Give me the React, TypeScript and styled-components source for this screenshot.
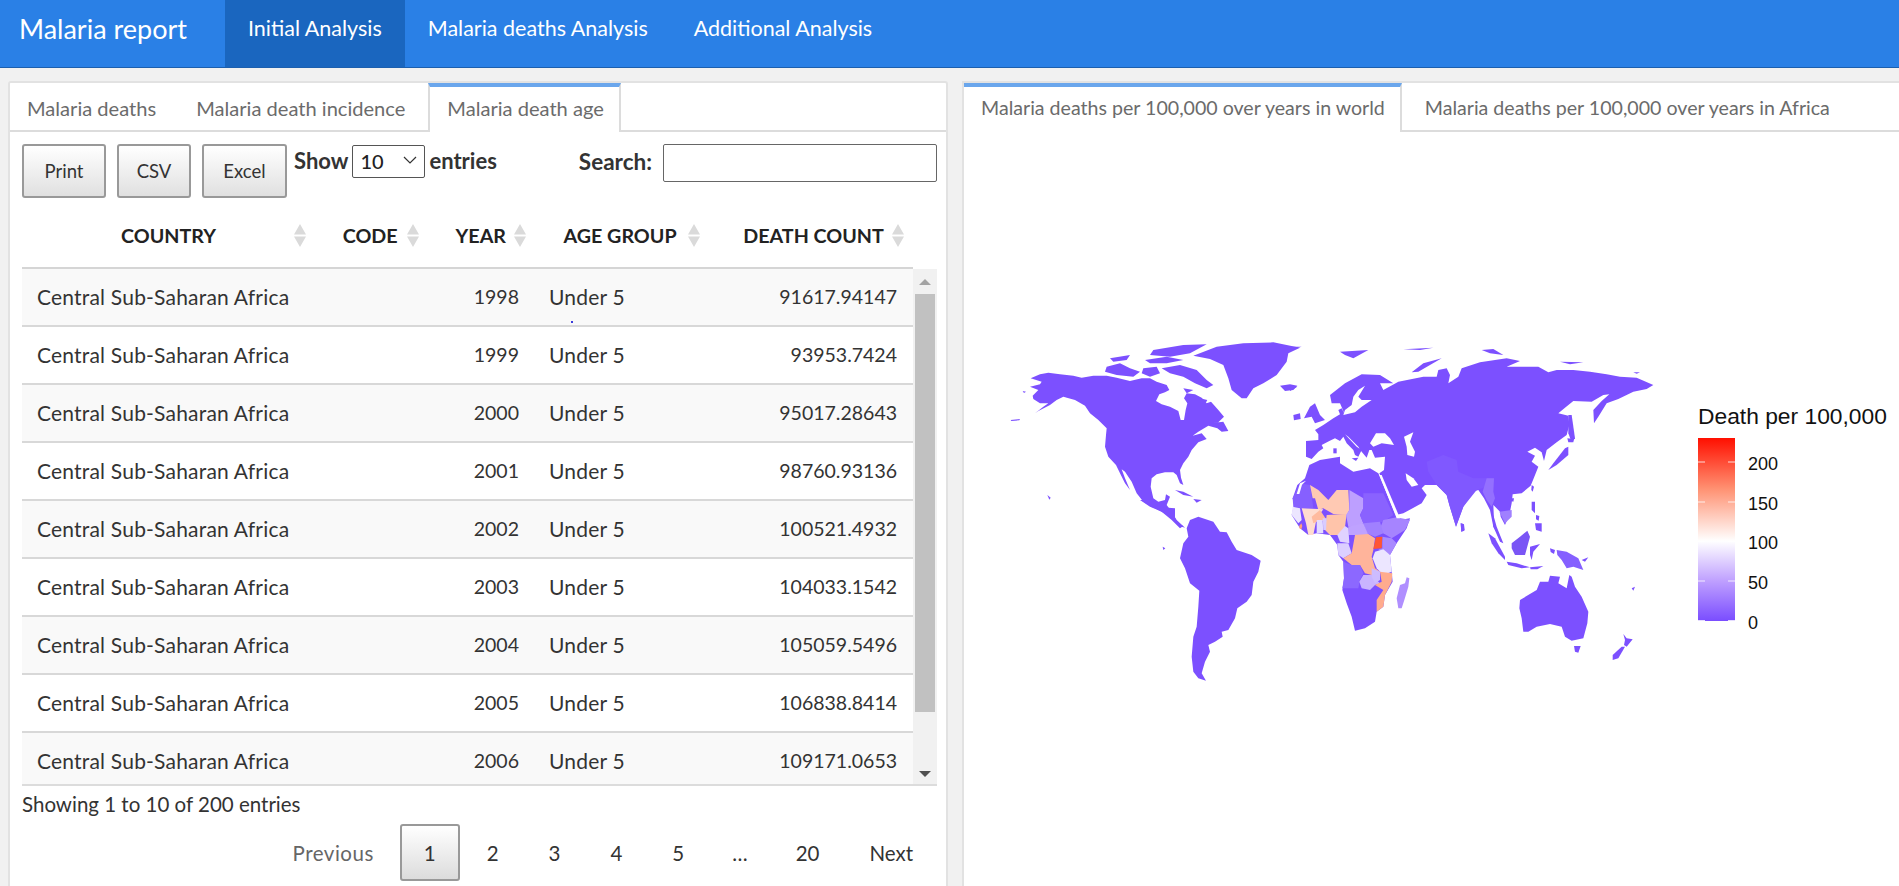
import React from 'react';
import styled, { createGlobalStyle } from 'styled-components';

const GlobalStyle = createGlobalStyle`
  html, body {
    margin: 0;
    height: 100%;
    overflow: hidden;
    background: #f1f1f1;
    font-family: Lato, "Open Sans", sans-serif;
    color: #333;
  }
  * { box-sizing: border-box; }
`;

const Navbar = styled.nav`
  display: flex;
  height: 68px;
  background: #2a80e6;
  border-bottom: 1px solid #1c5fae;
  color: #fff;
`;

const Brand = styled.div`
  width: 225px;
  padding-left: 19px;
  font-size: 27px;
  line-height: 57px;
`;

const NavLink = styled.div<{ $active?: boolean }>`
  padding: 0 23px;
  font-size: 21.5px;
  line-height: 56px;
  background: ${({ $active }) => ($active ? '#1a66bf' : 'transparent')};
`;

const Main = styled.main`
  display: flex;
  gap: 14px;
  height: 818px;
  padding: 13px 0 0 8px;
`;

const LeftBox = styled.section`
  width: 940px;
  background: #fff;
  border: 2px solid #e2e2e2;
  border-bottom: 0;
  border-radius: 3px 3px 0 0;
`;

const RightBox = styled.section`
  flex: 1;
  background: #fff;
  border-left: 2px solid #e2e2e2;
  border-top: 2px solid #e2e2e2;
`;

const TabBar = styled.div<{ $size: number }>`
  display: flex;
  height: 49px;
  font-size: ${({ $size }) => $size}px;
  border-bottom: 2px solid #dcdcdc;
`;

const Tab = styled.div<{ $left?: number; $right?: number }>`
  padding: 0 ${({ $right }) => $right ?? 20}px 0 ${({ $left }) => $left ?? 20}px;
  height: 47px;
  line-height: 50px;
  color: #6b6b6b;
  white-space: nowrap;
`;

const ActiveTab = styled(Tab)<{ $edge?: boolean }>`
  height: 49px;
  padding: 0 15px 0 17px;
  line-height: 42px;
  background: #fff;
  border-top: 4px solid #6aa6ec;
  border-right: 2px solid #dcdcdc;
  border-left: ${({ $edge }) => ($edge ? '0' : '2px solid #dcdcdc')};
`;

const Content = styled.div`
  position: relative;
  padding: 12px 9px 0 12px;
`;

const Controls = styled.div`
  display: flex;
  height: 62px;
`;

const ActionButton = styled.button<{ $width: number }>`
  width: ${({ $width }) => $width}px;
  height: 54px;
  margin-right: 11px;
  padding: 0;
  font: 18.5px Lato, sans-serif;
  color: #333;
  background: linear-gradient(#fff, #e0e0e0);
  border: 2px solid #999;
  border-radius: 3px;
`;

const LengthLabel = styled.label`
  display: flex;
  gap: 4px;
  height: 34px;
  margin-left: -4px;
  font-size: 22px;
  font-weight: 700;
  line-height: 33px;
`;

const SelectWrap = styled.span`
  position: relative;
  display: block;
  width: 73px;
  height: 33px;
`;

const LengthSelect = styled.select`
  appearance: none;
  width: 100%;
  height: 100%;
  padding-left: 7px;
  font: 500 20px Lato, sans-serif;
  color: #222;
  background: #fff;
  border: 1px solid #555;
  border-radius: 2px;
`;

const Chevron = styled.svg`
  position: absolute;
  top: 12px;
  right: 8px;
  pointer-events: none;
`;

const SearchLabel = styled.label`
  display: flex;
  gap: 11px;
  margin-left: auto;
  font-size: 22.5px;
  font-weight: 700;
  line-height: 36px;
`;

const SearchInput = styled.input`
  width: 274px;
  height: 38px;
  border: 1px solid #666;
  border-radius: 2px;
`;

const HeaderRow = styled.div`
  display: flex;
  align-items: center;
  width: 891px;
  height: 62px;
  margin-top: 1px;
  border-bottom: 2px solid #d5d5d5;
`;

const HeaderCell = styled.div<{ $width: number; $pad: number; $gap: number }>`
  display: flex;
  align-items: center;
  gap: ${({ $gap }) => $gap}px;
  width: ${({ $width }) => $width}px;
  padding: 0 0 4px ${({ $pad }) => $pad}px;
  font-size: 19.7px;
  font-weight: 700;
  color: #222;
  white-space: nowrap;
`;

const SortArrows = () => (
  <svg width="12" height="23" viewBox="0 0 12 23">
    <path d="M6 0 L12 10.5 H0 Z M0 12.5 H12 L6 23 Z" fill="#dadada" />
  </svg>
);

const TableFrame = styled.div`
  display: flex;
  height: 517px;
  border-bottom: 2px solid #dcdcdc;
`;

const Rows = styled.div`
  width: 891px;
  overflow: hidden;
`;

const Row = styled.div<{ $odd: boolean }>`
  display: grid;
  grid-template-columns: 390px 92px 1fr;
  align-items: center;
  height: 58px;
  padding: 0 16px 2px 15px;
  font-size: 21px;
  letter-spacing: 0.2px;
  background: ${({ $odd }) => ($odd ? '#f9f9f9' : '#fff')};
  border-bottom: 2px solid #d8d8d8;
`;

const Numeric = styled.span`
  font-size: 19.5px;
  letter-spacing: 0;
`;

const Year = styled(Numeric)`
  text-align: right;
`;

const AgeGroup = styled.div`
  display: flex;
  justify-content: space-between;
  align-items: center;
  padding-left: 30px;
`;

const ScrollTrack = styled.div`
  display: flex;
  flex-direction: column;
  align-items: center;
  width: 24px;
  padding: 10px 2px 7px;
  background: #f1f1f1;
`;

const ScrollThumb = styled.div`
  width: 20px;
  height: 418px;
  margin: 9px 0 auto;
  background: #c1c1c1;
`;

const ScrollArrow = styled.div<{ $down?: boolean }>`
  width: 0;
  height: 0;
  border-left: 6px solid transparent;
  border-right: 6px solid transparent;
  ${({ $down }) => ($down ? 'border-top: 6px solid #505050;' : 'border-bottom: 6px solid #a3a3a3;')}
`;

const StrayDot = styled.div`
  position: absolute;
  top: 189px;
  left: 561px;
  width: 2px;
  height: 2px;
  background: #3b3bdc;
`;

const TableInfo = styled.div`
  margin-top: 5px;
  font-size: 20.5px;
  line-height: 27px;
`;

const Pager = styled.div`
  display: flex;
  justify-content: flex-end;
  align-items: center;
  margin-top: 6px;
  margin-right: -1px;
  height: 57px;
`;

const PageButton = styled.div`
  display: flex;
  align-items: center;
  height: 57px;
  padding: 0 25px;
  font-size: 20.5px;
  color: #333;
`;

const PreviousButton = styled(PageButton)`
  color: #666;
  letter-spacing: 0.5px;
`;

const CurrentPage = styled(PageButton)`
  margin: 0 2px 0 1px;
  padding: 0 22px;
  background: linear-gradient(#fff, #dcdcdc);
  border: 2px solid #999;
  border-radius: 3px;
`;

const PageGap = styled(PageButton)`
  padding: 0 23px;
`;

const PlotArea = styled.div`
  display: flex;
  padding: 198px 0 0 36px;
`;

const MapSvg = styled.svg`
  display: block;
  flex: none;
`;

const Legend = styled.div`
  flex: none;
  margin: 73px 0 0 18px;
  font-family: "Liberation Sans", Arial, sans-serif;
  color: #111;
`;

const LegendTitle = styled.div`
  font-size: 22.8px;
  line-height: 27px;
  white-space: nowrap;
`;

const LegendBody = styled.div`
  display: flex;
  gap: 13px;
  margin-top: 8px;
`;

const LegendLabels = styled.div`
  margin-top: 7px;
  font-size: 18px;
  line-height: 39.7px;
`;

const ColourBar = () => (
  <svg width="37" height="183" viewBox="0 0 37 183">
    <defs>
      <linearGradient id="deathScale" x1="0" y1="0" x2="0" y2="1">
        <stop offset="0" stopColor="#ff0f00" />
        <stop offset="0.28" stopColor="#ff9273" />
        <stop offset="0.563" stopColor="#ffffff" />
        <stop offset="0.78" stopColor="#bfa0ff" />
        <stop offset="1" stopColor="#7a4dff" />
      </linearGradient>
    </defs>
    <rect width="37" height="183" fill="url(#deathScale)" />
    <path
      d="M0 24h7M30 24h7M0 64h7M30 64h7M0 103.500h7M30 103.500h7M0 143h7M30 143h7M0 182.500h7M30 182.500h7"
      stroke="#fff"
      strokeOpacity="0.8"
    />
  </svg>
);

const BASE = '#7c50ff';

type Shape = [string, string?];

// traced from the plot, one list per crop of the map (3x pixel coordinates)
const northAmerica: Shape[] = [
  ['62,130 90,118 115,113 150,118 190,122 215,128 250,122 290,122 320,128 360,138 395,130 420,130 440,140 470,150 478,165 465,172 448,178 438,198 455,208 480,215 505,228 512,255 522,255 527,225 532,205 522,190 530,175 555,178 575,188 590,205 603,200 625,225 642,245 625,262 600,265 640,260 655,288 635,290 622,280 595,272 565,290 548,302 575,295 590,312 565,322 545,345 535,365 520,385 510,405 513,428 520,450 510,445 500,420 490,412 465,412 440,418 425,430 422,455 430,490 445,500 465,495 468,478 480,485 470,510 485,530 500,555 525,578 505,572 480,545 455,530 425,515 400,500 380,475 365,440 345,410 335,403 345,430 360,465 345,445 330,415 318,390 295,365 285,335 288,300 290,280 265,255 240,235 225,212 195,195 160,185 140,195 120,210 85,228 75,235 100,215 115,205 90,205 70,192 68,182 85,165 60,155 90,148 95,140'],
  ['455,100 510,90 560,105 590,135 610,150 590,160 555,145 520,125 480,115'],
  ['290,95 330,85 360,100 390,110 370,125 320,120 285,110'],
  ['300,70 360,60 350,75 310,80'],
  ['430,45 520,30 590,28 540,55 480,65 420,60'],
  ['405,75 470,65 520,75 470,85 420,85'],
  ['400,100 440,95 450,115 420,125 395,115'],
  ['520,160 550,165 530,175'],
  ['570,190 592,195 585,208 572,205'],
  ['550,62 620,35 700,25 790,22 870,38 835,55 830,80 800,120 760,145 730,160 710,190 695,190 665,165 655,130 640,90 600,72'],
  ['810,152 840,148 862,152 850,165 825,168'],
  ['495,465 520,470 550,485 520,480'],
  ['550,492 575,495 560,503'],
  ['2,255 30,252 28,256 4,258'],
  ['112,480 122,488 118,494'],
  ['38,168 48,170 42,174'],
];

const southAmerica: Shape[] = [
  ['30,0 60,0 95,22 135,25 135,55 145,72 160,78 150,85 125,60 95,35 60,20'],
  ['180,60 205,50 250,65 270,95 290,97 305,125 320,150 365,165 392,182 385,215 370,245 365,285 350,305 322,325 315,355 295,390 275,395 278,410 255,425 235,435 240,455 225,485 215,520 228,542 205,535 190,515 185,470 190,410 200,380 205,320 208,272 180,250 165,205 150,175 160,130 175,110 170,85'],
  ['98,140 106,145 100,150'],
];

const eurasia: Shape[] = [
  ['48,318 85,315 85,298 75,285 100,270 130,250 150,238 145,225 155,220 165,240 150,205 125,205 120,180 165,145 215,118 270,120 310,145 270,145 280,165 325,140 400,125 440,125 445,105 470,100 480,120 475,145 505,125 515,100 570,82 650,70 690,78 650,95 700,95 745,95 775,112 800,105 850,105 900,110 950,118 990,125 1040,128 1090,150 1070,162 1030,170 985,192 950,205 925,245 912,265 910,225 935,198 958,178 940,180 905,200 850,198 825,218 805,235 835,242 838,270 830,300 800,322 770,345 762,378 755,352 735,338 712,350 735,362 725,380 745,395 733,425 722,452 695,475 668,478 665,505 658,540 645,570 632,545 630,530 610,510 612,555 625,600 610,575 600,525 582,490 565,465 548,470 520,515 498,575 478,510 470,480 440,450 405,450 395,460 410,480 395,505 340,535 318,540 292,470 268,415 282,405 285,365 255,368 245,345 238,345 230,368 215,350 205,335 175,305 165,298 200,335 215,345 205,365 195,360 190,345 170,325 160,305 150,318 135,310 118,318 95,330 100,340 85,350 65,372 48,365'],
  ['410,380 460,360 500,375 505,410 550,430 610,430 605,450 560,465 520,515 498,575 478,510 470,480 440,450 415,410', '#8058ff'],
  ['590,430 612,430 610,470 615,490 605,515 590,495 578,470', '#9470ff'],
  ['628,530 665,525 665,545 645,565', '#a080ff'],
  ['42,250 60,215 75,205 90,240 105,255 75,265 65,245'],
  ['10,240 30,235 32,252 12,256'],
  ['150,50 235,45 190,70 165,60'],
  ['340,43 430,38 390,45'],
  ['575,45 610,42 640,60 600,55'],
  ['810,80 880,82 840,88'],
  ['1030,112 1050,112 1040,116'],
  ['365,112 400,85 455,70 420,90 385,110'],
  ['835,240 845,240 855,310 845,322 835,295'],
  ['790,385 825,340 835,335 835,360 800,390 775,405'],
  ['832,310 852,312 850,322 835,322'],
  ['512,565 522,568 524,585 514,590'],
  ['0,35 35,35 0,45'],
  ['0,150 22,155 0,168'],
  ['130,340 140,340 140,355 130,355'],
  ['185,370 205,368 198,378'],
];

const inlandSeas: Shape[] = [
  ['240,325 258,295 285,295 300,310 312,330 275,325 250,335', '#fff'],
  ['342,305 370,292 360,320 375,350 372,365 352,360 350,335', '#fff'],
  ['347,415 370,430 385,450 365,455 350,435', '#fff'],
  ['225,152 205,165 190,185 185,210 165,225 160,240 195,232 215,215 245,195 215,195 205,185', '#fff'],
];

const africa: Shape[] = [
  ['218,175 232,135 255,115 268,75 300,60 360,50 360,70 400,95 450,85 475,100 500,160 530,232 540,240 570,235 560,265 530,310 510,345 515,395 518,425 495,465 490,500 470,515 465,545 435,565 405,572 395,530 380,490 367,450 372,415 370,365 355,345 352,315 330,285 290,280 265,285 240,265 215,225 222,195'],
  ['218,175 240,130 270,135 280,205 245,205 220,200', '#8660ff'],
  ['230,162 240,130 258,122 246,134 238,162', '#fff'],
  ['218,200 240,205 245,240 235,250 215,225', '#ece6ff'],
  ['270,135 295,150 325,180 350,150 385,150 388,210 380,225 340,222 310,205 295,210 285,175 278,175', '#ffc9b3'],
  ['245,205 310,208 290,235 280,285 265,285 258,250', '#ffdccf'],
  ['275,230 300,210 320,240 290,245 280,250', '#ffbb9f'],
  ['320,225 380,222 375,260 355,285 330,285 315,270', '#ffc4aa'],
  ['290,240 308,240 310,280 290,280', '#e4dcff'],
  ['308,235 320,235 318,270 310,270', '#d8ccff'],
  ['388,150 430,175 430,205 420,225 430,250 410,262 385,260 378,225 388,210', '#bd9fff'],
  ['430,160 490,160 520,225 490,245 460,252 430,250 420,225 430,205', '#8a62ff'],
  ['490,240 530,232 570,240 555,270 515,295 490,280 480,265', '#a684ff'],
  ['430,250 480,245 490,280 465,290 440,280', '#a080ff'],
  ['385,260 430,250 445,285 405,285 385,285', '#bfa2ff'],
  ['352,285 375,258 385,265 388,310 360,305', '#e0d3ff'],
  ['352,310 385,310 395,340 370,355 355,345', '#dccfff'],
  ['405,285 445,282 465,295 460,330 455,350 465,385 480,395 470,415 455,405 435,400 420,375 395,375 370,355 395,340', '#ffb49b'],
  ['487,290 515,295 530,310 510,345 475,328 487,325', '#a98aff'],
  ['468,292 487,290 485,325 460,327', '#ff5533'],
  ['465,335 490,328 510,345 515,395 490,405 470,385 458,355', '#ece6ff'],
  ['370,365 395,375 420,375 430,400 420,420 415,445 367,445 372,415', '#8c68ff'],
  ['430,405 455,405 480,430 465,435 450,450 425,445 418,425', '#c9b4ff'],
  ['455,385 480,395 480,420 465,430 455,410', '#cdbcff'],
  ['480,395 517,400 515,425 495,465 490,500 470,515 470,480 490,450 465,435 485,425', '#ffab8e'],
  ['560,412 568,415 565,440 553,480 545,505 535,505 530,475 540,435 555,430', '#b08fff'],
  ['478,105 485,105 540,235 530,235', '#fff'],
  ['238,257 244,250 247,258 244,268 238,265', '#ff9f7a'],
];

const oceania: Shape[] = [
  ['115,160 135,175 165,230 165,240 145,220 125,190'],
  ['130,105 140,140 160,190 150,185 130,140 128,115'],
  ['185,190 210,170 232,152 240,170 225,225 195,225 185,205', '#7a55f5'],
  ['170,245 200,250 240,262 215,265 175,255'],
  ['240,262 280,258 262,268 242,268'],
  ['240,200 270,192 250,215 245,240 240,225'],
  ['300,205 315,210 312,222 302,216'],
  ['320,210 350,215 385,235 400,270 370,260 350,265 335,240 322,225', '#8560ff'],
  ['395,240 415,232 405,245'],
  ['245,65 255,65 255,100 245,90'],
  ['255,130 275,130 275,155 258,150'],
  ['258,105 268,108 266,122 258,118'],
  ['210,360 260,330 270,305 295,305 300,287 330,290 325,310 350,325 358,285 365,290 375,320 395,350 415,395 412,430 400,475 365,482 345,470 335,440 300,432 260,440 235,455 220,455 215,415 208,385'],
  ['372,498 392,498 385,518 375,515'],
  ['520,462 530,475 548,478 530,500 522,495 525,480'],
  ['515,500 525,500 505,535 488,540 488,525'],
  ['545,325 555,320 550,332'],
  ['245,15 252,20 248,35 244,30'],
  ['185,55 192,55 190,65 183,63'],
  ['32,130 40,132 43,152 34,155'],
];

const Land = ({ shapes, x, y }: { shapes: Shape[]; x: number; y: number }) => (
  <g transform={`translate(${x} ${y}) scale(${1 / 3})`}>
    {shapes.map(([points, fill], i) => (
      <polygon key={i} points={points} fill={fill ?? BASE} />
    ))}
  </g>
);

const WorldMap = () => (
  <MapSvg width="680" height="370" viewBox="1000 330 680 370">
    <Land shapes={northAmerica} x={1010} y={335} />
    <Land shapes={southAmerica} x={1130} y={500} />
    <Land shapes={eurasia} x={1290} y={335} />
    <Land shapes={inlandSeas} x={1290} y={335} />
    <Land shapes={africa} x={1220} y={440} />
    <Land shapes={oceania} x={1450} y={480} />
  </MapSvg>
);

const rows = [
  ['1998', '91617.94147'],
  ['1999', '93953.7424'],
  ['2000', '95017.28643'],
  ['2001', '98760.93136'],
  ['2002', '100521.4932'],
  ['2003', '104033.1542'],
  ['2004', '105059.5496'],
  ['2005', '106838.8414'],
  ['2006', '109171.0653'],
];

const columns = [
  { name: 'COUNTRY', width: 299, pad: 99, gap: 78 },
  { name: 'CODE', width: 114, pad: 22, gap: 9 },
  { name: 'YEAR', width: 106, pad: 21, gap: 8 },
  { name: 'AGE GROUP', width: 183, pad: 23, gap: 11 },
  { name: 'DEATH COUNT', width: 190, pad: 20, gap: 8 },
];

export default function App() {
  return (
    <>
      <GlobalStyle />
      <Navbar>
        <Brand>Malaria report</Brand>
        <NavLink $active>Initial Analysis</NavLink>
        <NavLink>Malaria deaths Analysis</NavLink>
        <NavLink>Additional Analysis</NavLink>
      </Navbar>
      <Main>
        <LeftBox>
          <TabBar $size={20.1}>
            <Tab $left={17}>Malaria deaths</Tab>
            <Tab $right={23}>Malaria death incidence</Tab>
            <ActiveTab>Malaria death age</ActiveTab>
          </TabBar>
          <Content>
            <Controls>
              <ActionButton $width={84}>Print</ActionButton>
              <ActionButton $width={74}>CSV</ActionButton>
              <ActionButton $width={85}>Excel</ActionButton>
              <LengthLabel>
                Show
                <SelectWrap>
                  <LengthSelect defaultValue="10">
                    <option>10</option>
                    <option>25</option>
                    <option>50</option>
                    <option>100</option>
                  </LengthSelect>
                  <Chevron width="14" height="8" viewBox="0 0 14 8">
                    <path d="M1 1 L7 7 L13 1" fill="none" stroke="#333" strokeWidth="1.200" />
                  </Chevron>
                </SelectWrap>
                entries
              </LengthLabel>
              <SearchLabel>
                Search:
                <SearchInput type="search" />
              </SearchLabel>
            </Controls>
            <HeaderRow>
              {columns.map((c) => (
                <HeaderCell key={c.name} $width={c.width} $pad={c.pad} $gap={c.gap}>
                  {c.name}
                  <SortArrows />
                </HeaderCell>
              ))}
            </HeaderRow>
            <TableFrame>
              <Rows>
                {rows.map(([year, count], i) => (
                  <Row key={year} $odd={i % 2 === 0}>
                    <div>Central Sub-Saharan Africa</div>
                    <Year>{year}</Year>
                    <AgeGroup>
                      <span>Under 5</span>
                      <Numeric>{count}</Numeric>
                    </AgeGroup>
                  </Row>
                ))}
              </Rows>
              <ScrollTrack>
                <ScrollArrow />
                <ScrollThumb />
                <ScrollArrow $down />
              </ScrollTrack>
            </TableFrame>
            <StrayDot />
            <TableInfo>Showing 1 to 10 of 200 entries</TableInfo>
            <Pager>
              <PreviousButton>Previous</PreviousButton>
              <CurrentPage>1</CurrentPage>
              <PageButton>2</PageButton>
              <PageButton>3</PageButton>
              <PageButton>4</PageButton>
              <PageButton>5</PageButton>
              <PageGap>…</PageGap>
              <PageButton>20</PageButton>
              <PageButton>Next</PageButton>
            </Pager>
          </Content>
        </LeftBox>
        <RightBox>
          <TabBar $size={19.6}>
            <ActiveTab $edge>Malaria deaths per 100,000 over years in world</ActiveTab>
            <Tab $left={23}>Malaria deaths per 100,000 over years in Africa</Tab>
          </TabBar>
          <PlotArea>
            <WorldMap />
            <Legend>
              <LegendTitle>Death per 100,000</LegendTitle>
              <LegendBody>
                <ColourBar />
                <LegendLabels>
                  <div>200</div>
                  <div>150</div>
                  <div>100</div>
                  <div>50</div>
                  <div>0</div>
                </LegendLabels>
              </LegendBody>
            </Legend>
          </PlotArea>
        </RightBox>
      </Main>
    </>
  );
}
